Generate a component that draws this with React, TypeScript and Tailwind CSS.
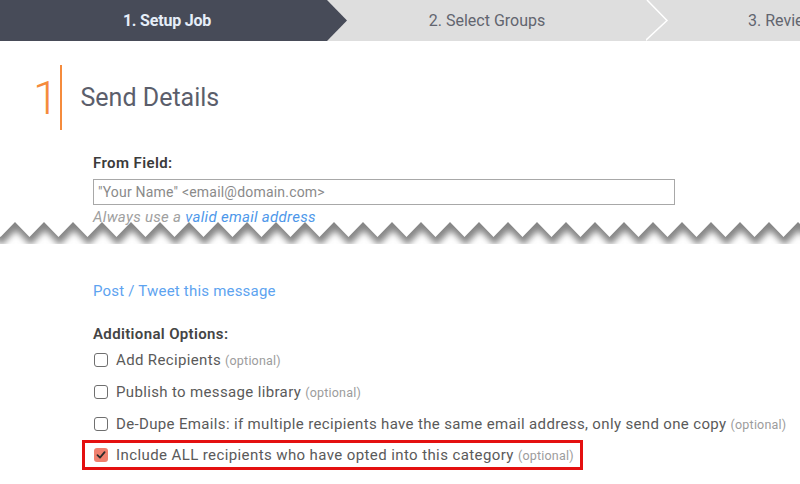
import React from "react";

const options = [
  { label: "Add Recipients", checked: false },
  { label: "Publish to message library", checked: false },
  { label: "De-Dupe Emails: if multiple recipients have the same email address, only send one copy", checked: false },
];

function Checkbox({ checked }: { checked: boolean }) {
  if (checked) {
    return (
      <span className="flex h-[14px] w-[14px] shrink-0 items-center justify-center rounded-[3px] bg-[#f0806e]">
        <svg width="10" height="10" viewBox="0 0 10 10">
          <path d="M1.5 5.2 L4 7.6 L8.6 2.2" fill="none" stroke="#2b2b2b" strokeWidth="1.8" strokeLinecap="round" strokeLinejoin="round" />
        </svg>
      </span>
    );
  }
  return <span className="h-[14px] w-[14px] shrink-0 rounded-[3px] border border-[#6f6f6f] bg-white" />;
}

// torn-paper edge between the two halves of the screenshot
function TornEdge() {
  const period = 29;
  const pts: string[] = [];
  for (let x = 15 - period * 2; x <= 840; x += period) {
    pts.push(`${x},10`);
    pts.push(`${x + period / 2},25`);
  }
  const line = pts.join(" ");
  return (
    <svg className="pointer-events-none absolute left-[-93px] top-[4px]" width="800" height="40" viewBox="0 0 800 40">
      <defs>
        <filter id="soft" x="-5%" y="-50%" width="110%" height="200%">
          <feGaussianBlur stdDeviation="3" />
        </filter>
        <clipPath id="below">
          <polygon points={`${line} 840,40 -60,40`} />
        </clipPath>
      </defs>
      <polygon points={`${line} 840,40 -60,40`} fill="#ffffff" />
      <g clipPath="url(#below)">
        <polyline points={line} fill="none" stroke="#858585" strokeWidth="13" filter="url(#soft)" transform="translate(1,-1)" />
      </g>
    </svg>
  );
}

export default function App() {
  return (
    <div className="h-[484px] w-[800px] overflow-hidden bg-white font-['Roboto',sans-serif]">
      {/* Steps */}
      <div className="flex h-[41px] bg-[#dedede]">
        <div className="flex w-[326px] shrink-0 items-center justify-center bg-[#474b58] pl-2 text-[16px] font-bold tracking-[-0.2px] text-[#e6eef8]">
          1. Setup Job
        </div>
        <svg width="22" height="41" viewBox="0 0 22 41" className="shrink-0">
          <polygon points="0,0 1,0 21,20.5 1,41 0,41" fill="#474b58" />
        </svg>
        <div className="flex w-[298px] shrink-0 items-center justify-center pr-5 text-[16px] text-[#62656f]">
          2. Select Groups
        </div>
        <svg width="24" height="41" viewBox="0 0 24 41" className="shrink-0">
          <polyline points="1,0 21,20.5 -1,41" fill="none" stroke="#ffffff" strokeWidth="1.5" />
        </svg>
        <div className="flex shrink-0 items-center pl-[78px] text-[16px] whitespace-nowrap text-[#62656f]">3. Review</div>
      </div>

      {/* Section heading */}
      <div className="mt-[24px] flex items-center pl-[33px]">
        <span className="text-[46px] leading-none font-light text-[#f58b3c]">1</span>
        <span className="ml-[1px] h-[65px] w-[2px] bg-[#f58b3c]" />
        <h1 className="ml-[19px] text-[25px] text-[#5b5e6b]">Send Details</h1>
      </div>

      {/* Form */}
      <div className="pl-[93px] tracking-[0.35px]">
        <div className="mt-[23px] text-[15px] leading-5 font-semibold tracking-[0.4px] text-[#3b3b3b]">From Field:</div>
        <div className="mt-[6px] flex h-[26px] w-[582px] items-center border border-[#a8a8a8] px-[4px] text-[14px] tracking-[0.2px] text-[#8a8a8a]">
          "Your Name" &lt;email@domain.com&gt;
        </div>
        <div className="relative">
          <div className="mt-[3px] text-[15px] leading-[18px] italic tracking-[0.3px] text-[#a0a0a0]">
            Always use a <span className="text-[#4d97ea]">valid email address</span>
          </div>
          <TornEdge />
        </div>

        <div className="mt-[55px] text-[15px] leading-5 tracking-[0.2px] text-[#5da3f0]">Post / Tweet this message</div>

        <div className="mt-[23px] text-[15px] leading-5 font-semibold text-[#444444]">Additional Options:</div>

        {options.map((o) => (
          <div key={o.label} className="flex h-[32px] items-center gap-[8px] pl-[1px]">
            <Checkbox checked={o.checked} />
            <span className="text-[15px] whitespace-nowrap text-[#5a5a5a]">
              {o.label} <span className="text-[12.5px] tracking-[0.2px] text-[#9c9c9c]">(optional)</span>
            </span>
          </div>
        ))}

        <div className="-ml-[11px] flex h-[30px] w-[501px] items-center gap-[8px] border-[3px] border-[#e41010] pl-[9px]">
          <Checkbox checked />
          <span className="text-[15px] whitespace-nowrap tracking-[0.4px] text-[#5a5a5a]">
            Include ALL recipients who have opted into this category{" "}
            <span className="text-[12.5px] tracking-[0.2px] text-[#9c9c9c]">(optional)</span>
          </span>
        </div>
      </div>
    </div>
  );
}
